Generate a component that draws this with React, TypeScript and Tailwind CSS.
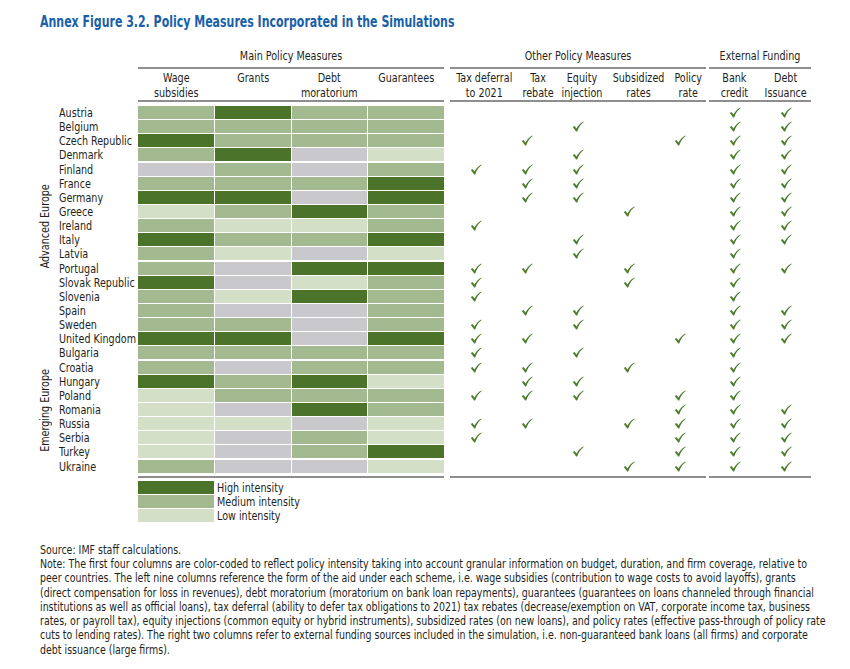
type Level = "H" | "M" | "L" | "N";

const levelClass: Record<Level, string> = {
  H: "bg-[#4b7329]",
  M: "bg-[#a3b98f]",
  L: "bg-[#d4dfc7]",
  N: "bg-[#c9c9cd]",
};

// other measures: TD TR EI SR PR | BC DI
interface Row {
  name: string;
  main: Level[];
  other: string;
  ext: string;
}

const advanced: Row[] = [
  { name: "Austria", main: ["M", "H", "M", "M"], other: "00000", ext: "11" },
  { name: "Belgium", main: ["M", "M", "M", "M"], other: "00100", ext: "11" },
  { name: "Czech Republic", main: ["H", "M", "M", "M"], other: "01001", ext: "11" },
  { name: "Denmark", main: ["M", "H", "N", "L"], other: "00100", ext: "11" },
  { name: "Finland", main: ["N", "M", "N", "M"], other: "11100", ext: "11" },
  { name: "France", main: ["M", "M", "M", "H"], other: "01100", ext: "11" },
  { name: "Germany", main: ["H", "H", "N", "H"], other: "01100", ext: "11" },
  { name: "Greece", main: ["L", "M", "H", "M"], other: "00010", ext: "11" },
  { name: "Ireland", main: ["M", "L", "L", "M"], other: "10000", ext: "11" },
  { name: "Italy", main: ["H", "M", "M", "H"], other: "00100", ext: "11" },
  { name: "Latvia", main: ["M", "L", "N", "L"], other: "00100", ext: "10" },
  { name: "Portugal", main: ["M", "N", "H", "H"], other: "11010", ext: "11" },
  { name: "Slovak Republic", main: ["H", "N", "L", "M"], other: "10010", ext: "10" },
  { name: "Slovenia", main: ["M", "L", "H", "M"], other: "10000", ext: "10" },
  { name: "Spain", main: ["M", "N", "N", "M"], other: "01100", ext: "11" },
  { name: "Sweden", main: ["M", "M", "N", "M"], other: "10100", ext: "11" },
  { name: "United Kingdom", main: ["H", "H", "N", "H"], other: "11001", ext: "11" },
];

const emerging: Row[] = [
  { name: "Bulgaria", main: ["M", "M", "M", "M"], other: "10100", ext: "10" },
  { name: "Croatia", main: ["M", "N", "M", "M"], other: "11010", ext: "10" },
  { name: "Hungary", main: ["H", "M", "H", "L"], other: "01100", ext: "10" },
  { name: "Poland", main: ["L", "M", "M", "M"], other: "11101", ext: "10" },
  { name: "Romania", main: ["L", "N", "H", "M"], other: "00001", ext: "11" },
  { name: "Russia", main: ["L", "L", "N", "L"], other: "11011", ext: "11" },
  { name: "Serbia", main: ["L", "N", "M", "L"], other: "10001", ext: "11" },
  { name: "Turkey", main: ["L", "N", "M", "H"], other: "00101", ext: "11" },
  { name: "Ukraine", main: ["M", "N", "N", "L"], other: "00011", ext: "11" },
];

const rows = [...advanced, ...emerging];

const noteLines = [
  "Source: IMF staff calculations.",
  "Note: The first four columns are color-coded to reflect policy intensity taking into account granular information on budget, duration, and firm coverage, relative to",
  "peer countries. The left nine columns reference the form of the aid under each scheme, i.e. wage subsidies (contribution to wage costs to avoid layoffs), grants",
  "(direct compensation for loss in revenues), debt moratorium (moratorium on bank loan repayments), guarantees (guarantees on loans channeled through financial",
  "institutions as well as official loans), tax deferral (ability to defer tax obligations to 2021) tax rebates (decrease/exemption on VAT, corporate income tax, business",
  "rates, or payroll tax), equity injections (common equity or hybrid instruments), subsidized rates (on new loans), and policy rates (effective pass-through of policy rate",
  "cuts to lending rates). The right two columns refer to external funding sources included in the simulation, i.e. non-guaranteed bank loans (all firms) and corporate",
  "debt issuance (large firms).",
];

function Check() {
  return (
    <svg width="12" height="11" viewBox="0 0 12 11">
      <path
        d="M0.8 6 L2.6 5 L4.4 7.6 C6 4.6 8.4 1.9 11.4 0.4 L11.7 0.9 C9 2.8 6.6 6 5.2 10.4 L4.2 10.4 Z"
        fill="#4f7d2e"
      />
    </svg>
  );
}

// condensed text: the installed fonts are wider than the original's
function Narrow({ children }: { children: React.ReactNode }) {
  return <span className="inline-block whitespace-nowrap origin-left scale-x-[0.82]">{children}</span>;
}

function GroupHeader({ title, cols }: { title: string; cols: string[][] }) {
  return (
    <div className="flex flex-col">
      <div className="text-center text-[13px] leading-[16px] pb-[3px] border-b-2 border-[#8e8e8e]">
        <div className="scale-x-[0.82] whitespace-nowrap">{title}</div>
      </div>
      <div className="flex border-b-2 border-[#8e8e8e] pt-px h-[33px]">
        {cols.map((c, i) => (
          <div key={i} className="flex-1 text-center text-[13px] leading-[15px] whitespace-nowrap">
            <div className="scale-x-[0.82]">
              {c.map((l, j) => (
                <div key={j}>{l}</div>
              ))}
            </div>
          </div>
        ))}
      </div>
    </div>
  );
}

function Checks({ flags, cols }: { flags: string; cols: string }) {
  return (
    <div className={`h-[14.15px] grid ${cols}`}>
      {flags.split("").map((v, i) => (
        <div key={i} className="flex justify-center items-center h-[13px]">
          {v === "1" && <Check />}
        </div>
      ))}
    </div>
  );
}

export default function App() {
  return (
    <div className="w-[850px] h-[669px] bg-white text-[#231f20] font-['Liberation_Sans_Narrow','DejaVu_Sans_Condensed','Liberation_Sans',sans-serif] [font-stretch:condensed] overflow-hidden">
      <div className="pl-[40px] pt-[12px] text-[16.5px] leading-[20px] font-bold text-[#1a5fa8]">
        <span className="inline-block whitespace-nowrap origin-left scale-x-[0.74]">
          Annex Figure 3.2. Policy Measures Incorporated in the Simulations
        </span>
      </div>

      <div className="flex pl-[38px] mt-[16px]">
        {/* group labels */}
        <div className="w-[14px] flex flex-col pt-[58px]">
          <div className="h-[240.55px] flex items-center justify-center">
            <span className="[writing-mode:vertical-rl] rotate-180 scale-y-[0.82] text-[13px] leading-[14px] whitespace-nowrap">
              Advanced Europe
            </span>
          </div>
          <div className="h-[127.35px] flex items-center justify-center">
            <span className="[writing-mode:vertical-rl] rotate-180 scale-y-[0.82] text-[13px] leading-[14px] whitespace-nowrap">
              Emerging Europe
            </span>
          </div>
        </div>

        {/* country names */}
        <div className="w-[86px] pl-[7px] flex flex-col pt-[58px]">
          {rows.map((r) => (
            <div key={r.name} className="h-[14.15px] text-[13px] leading-[14px]">
              <Narrow>{r.name}</Narrow>
            </div>
          ))}
        </div>

        {/* main policy measures */}
        <div className="flex flex-col w-[306px]">
          <GroupHeader
            title="Main Policy Measures"
            cols={[["Wage", "subsidies"], ["Grants"], ["Debt", "moratorium"], ["Guarantees"]]}
          />
          <div className="mt-[4px] flex flex-col">
            {rows.map((r) => (
              <div key={r.name} className="h-[14.15px] grid grid-cols-4 gap-x-px">
                {r.main.map((lv, i) => (
                  <div key={i} className={`h-[13px] ${levelClass[lv]}`} />
                ))}
              </div>
            ))}
          </div>
          <div className="mt-[2px] border-b-2 border-[#8e8e8e]" />
          <div className="mt-[3px] flex flex-col text-[13px] leading-[14px]">
            {[
              ["H", "High intensity"],
              ["M", "Medium intensity"],
              ["L", "Low intensity"],
            ].map(([lv, label]) => (
              <div key={lv} className="flex items-center h-[14px]">
                <div className={`w-[76px] h-[13px] ${levelClass[lv as Level]}`} />
                <span className="ml-[3px]">
                  <Narrow>{label}</Narrow>
                </span>
              </div>
            ))}
          </div>
        </div>

        {/* other policy measures */}
        <div className="flex flex-col w-[256px] ml-[6px]">
          <GroupHeader
            title="Other Policy Measures"
            cols={[["Tax deferral", "to 2021"], ["Tax", "rebate"], ["Equity", "injection"], ["Subsidized", "rates"], ["Policy", "rate"]]}
          />
          <div className="mt-[4px] flex flex-col">
            {rows.map((r) => (
              <Checks key={r.name} flags={r.other} cols="grid-cols-5" />
            ))}
          </div>
          <div className="mt-[2px] border-b-2 border-[#8e8e8e]" />
        </div>

        {/* external funding */}
        <div className="flex flex-col w-[102px] ml-[3px]">
          <GroupHeader title="External Funding" cols={[["Bank", "credit"], ["Debt", "Issuance"]]} />
          <div className="mt-[4px] flex flex-col">
            {rows.map((r) => (
              <Checks key={r.name} flags={r.ext} cols="grid-cols-2" />
            ))}
          </div>
          <div className="mt-[2px] border-b-2 border-[#8e8e8e]" />
        </div>
      </div>

      <div className="pl-[40px] mt-[20px] text-[12.5px] leading-[14.3px]">
        <div className="origin-left scale-x-[0.84]">
          {noteLines.map((l, i) => (
            <div key={i} className="whitespace-nowrap">
              {l}
            </div>
          ))}
        </div>
      </div>
    </div>
  );
}
